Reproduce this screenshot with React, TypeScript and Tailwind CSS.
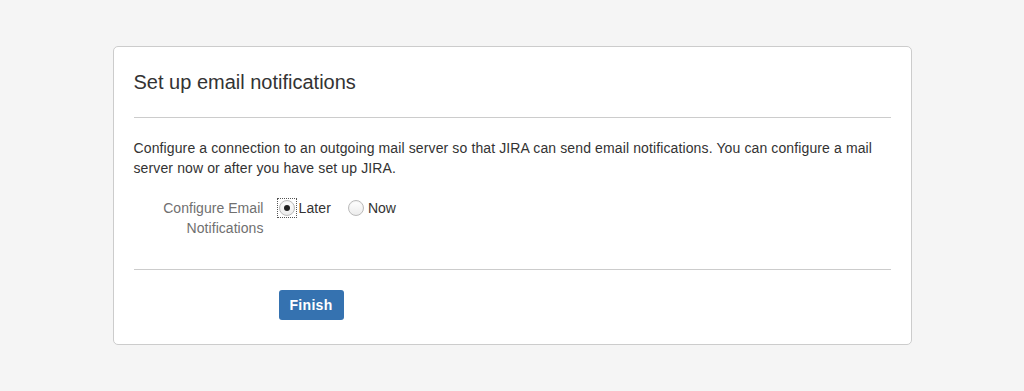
import React from "react";

const Radio = ({ checked, focused }: { checked?: boolean; focused?: boolean }) => (
  <span
    className={
      "flex items-center justify-center w-[20px] h-[20px] " +
      (focused ? "outline-1 outline-dotted outline-[#555] -outline-offset-1" : "")
    }
  >
    <span className="flex items-center justify-center w-[16px] h-[16px] rounded-full border border-[#bbb] bg-gradient-to-b from-white to-[#ececec] shadow-[inset_0_1px_1px_rgba(0,0,0,0.05)]">
      {checked && <span className="block w-[6px] h-[6px] rounded-full bg-[#222]"></span>}
    </span>
  </span>
);

const App = () => {
  return (
    <div className="min-h-[391px] bg-[#f5f5f5] pt-[46px] font-['Liberation_Sans',Arial,sans-serif] text-[#333]">
      <div className="mx-auto w-[799px] bg-white border border-[#ccc] rounded-[5px] px-[20px] pt-[20px] pb-[24px]">
        <h1 className="text-[20px] leading-[30px] font-normal text-[#333]">Set up email notifications</h1>
        <div className="mt-[20px] border-t border-[#ccc]"></div>
        <p className="mt-[20px] text-[14px] leading-[20px] tracking-[0.12px]">
          Configure a connection to an outgoing mail server so that JIRA can send email notifications. You can configure a mail
          server now or after you have set up JIRA.
        </p>
        <div className="mt-[20px] flex text-[14px] leading-[20px]">
          <div className="w-[130px] text-right text-[#707070] tracking-[0.05px]">
            Configure Email
            <br />
            Notifications
          </div>
          <div className="ml-[13px] flex items-start">
            <label className="flex items-center gap-[2px]">
              <Radio checked focused />
              <span className="text-[#333] tracking-[0.1px]">Later</span>
            </label>
            <label className="ml-[15px] flex items-center gap-[2px]">
              <Radio />
              <span className="text-[#333]">Now</span>
            </label>
          </div>
        </div>
        <div className="mt-[31px] border-t border-[#ccc]"></div>
        <div className="mt-[20px] pl-[145px]">
          <button className="h-[30px] px-[11px] rounded-[3px] bg-[#3572b0] text-white text-[14px] font-bold tracking-[0.3px]">
            Finish
          </button>
        </div>
      </div>
    </div>
  );
};

export default App;
